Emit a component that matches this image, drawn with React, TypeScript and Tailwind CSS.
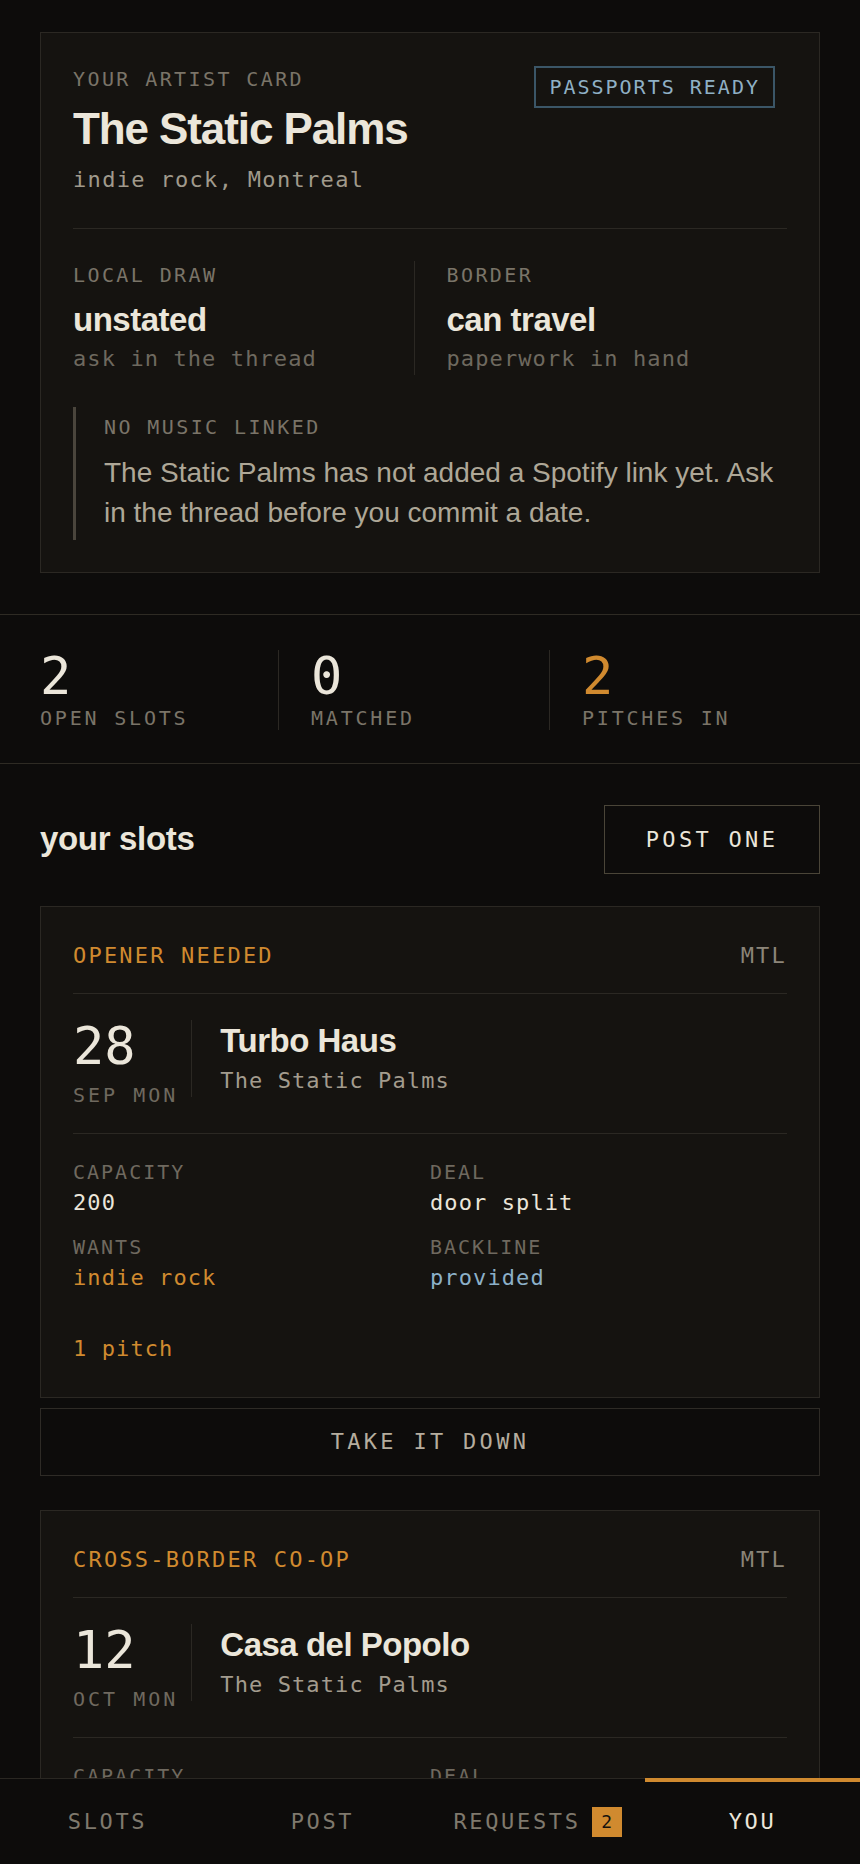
import React from "react";

const mono = "font-['DejaVu_Sans_Mono',monospace]";
const label =
  "font-['DejaVu_Sans_Mono',monospace] text-[20px] leading-[28px] tracking-[0.12em] uppercase text-[#7a7468]";

type Slot = {
  tag: string;
  city: string;
  day: string;
  month: string;
  venue: string;
  artist: string;
  capacity: string;
  deal: string;
  wants: string;
  backline: string;
  pitches: string;
};

const SLOTS: Slot[] = [
  {
    tag: "opener needed",
    city: "MTL",
    day: "28",
    month: "Sep Mon",
    venue: "Turbo Haus",
    artist: "The Static Palms",
    capacity: "200",
    deal: "door split",
    wants: "indie rock",
    backline: "provided",
    pitches: "1 pitch",
  },
  {
    tag: "cross-border co-op",
    city: "MTL",
    day: "12",
    month: "Oct Mon",
    venue: "Casa del Popolo",
    artist: "The Static Palms",
    capacity: "150",
    deal: "guarantee",
    wants: "indie rock",
    backline: "shared",
    pitches: "1 pitch",
  },
];

function SlotCard({ slot }: { slot: Slot }) {
  return (
    <div className="border border-[#2b2823] bg-[#151310] p-8">
      <div className="flex items-center justify-between border-b border-[#2b2823] pb-[21px]">
        <span className={`${mono} text-[22px] leading-[33px] tracking-[0.1em] uppercase text-[#d08a2f]`}>
          {slot.tag}
        </span>
        <span className={`${mono} text-[22px] leading-[33px] tracking-[0.1em] text-[#8c8579]`}>
          {slot.city}
        </span>
      </div>

      <div className="flex items-start border-b border-[#2b2823] pt-[26px] pb-[26px]">
        <div className="pr-[13px]">
          <div className={`${mono} text-[52px] leading-none text-[#ebe6da]`}>{slot.day}</div>
          <div
            className={`${mono} mt-[11px] text-[20px] leading-[24px] tracking-[0.15em] uppercase text-[#6f695f]`}
          >
            {slot.month}
          </div>
        </div>
        <div className="border-l border-[#2b2823] pt-[3px] pl-7">
          <div className="text-[33px] font-bold leading-[1.1] tracking-[-0.015em] text-[#ebe6da]">
            {slot.venue}
          </div>
          <div className={`${mono} mt-[5px] text-[22px] leading-[33px] tracking-[0.05em] text-[#a39c8e]`}>
            {slot.artist}
          </div>
        </div>
      </div>

      <div className="grid grid-cols-2 gap-y-[14px] pt-6">
        <Detail name="capacity" value={slot.capacity} tone="text-[#ebe6da]" />
        <Detail name="deal" value={slot.deal} tone="text-[#ebe6da]" />
        <Detail name="wants" value={slot.wants} tone="text-[#d08a2f]" />
        <Detail name="backline" value={slot.backline} tone="text-[#8cb0c8]" />
      </div>

      <div className={`${mono} mt-[38px] text-[22px] leading-[33px] tracking-[0.05em] text-[#d08a2f]`}>
        {slot.pitches}
      </div>
    </div>
  );
}

function Detail({ name, value, tone }: { name: string; value: string; tone: string }) {
  return (
    <div>
      <div className={`${mono} text-[20px] leading-[28px] tracking-[0.1em] uppercase text-[#6f695f]`}>
        {name}
      </div>
      <div className={`${mono} text-[22px] leading-[33px] tracking-[0.05em] ${tone}`}>{value}</div>
    </div>
  );
}

function Stat({ n, name, first, hot }: { n: string; name: string; first?: boolean; hot?: boolean }) {
  return (
    <div className={first ? "flex-1" : "flex-1 border-l border-[#2b2823] pl-8"}>
      <div className={`${mono} text-[52px] leading-none ${hot ? "text-[#d08a2f]" : "text-[#ebe6da]"}`}>{n}</div>
      <div
        className={`${mono} mt-[4px] text-[20px] leading-[24px] tracking-[0.14em] uppercase text-[#7a7468]`}
      >
        {name}
      </div>
    </div>
  );
}

const TABS = ["slots", "post", "requests", "you"];

export default function App() {
  return (
    <div className="min-h-screen bg-[#0d0c0b] pb-[120px] font-['Liberation_Sans',Arial,sans-serif] text-[#ebe6da]">
      <section className="px-10 pt-8 pb-[41px]">
        <div className="border border-[#2b2823] bg-[#151310] p-8">
          <div className="flex items-start justify-between border-b border-[#2b2823] pb-8">
            <div>
              <div className={label}>Your artist card</div>
              <h1 className="mt-3 text-[44px] font-bold leading-[1.1] tracking-[-0.025em] text-[#ebe6da]">
                The Static Palms
              </h1>
              <div className={`${mono} mt-2.5 text-[22px] leading-[33px] tracking-[0.06em] text-[#a09a8c]`}>
                indie rock, Montreal
              </div>
            </div>
            <div
              className={`${mono} mt-px mr-3 flex h-[42px] items-center border-2 border-[#3b5667] px-[13px] text-[20px] tracking-[0.1em] uppercase text-[#8fb0c5]`}
            >
              Passports ready
            </div>
          </div>

          <div className="flex pt-8">
            <div className="flex-1">
              <div className={label}>Local draw</div>
              <div className="mt-[13px] text-[33px] font-bold leading-[1.1] tracking-[-0.015em]">unstated</div>
              <div className={`${mono} mt-[3px] text-[22px] leading-[33px] tracking-[0.05em] text-[#6e695f]`}>
                ask in the thread
              </div>
            </div>
            <div className="flex-1 border-l border-[#2b2823] pl-8">
              <div className={label}>Border</div>
              <div className="mt-[13px] text-[33px] font-bold leading-[1.1] tracking-[-0.015em]">can travel</div>
              <div className={`${mono} mt-[3px] text-[22px] leading-[33px] tracking-[0.05em] text-[#6e695f]`}>
                paperwork in hand
              </div>
            </div>
          </div>

          <div className="mt-8 border-l-[3px] border-[#4a453c] pt-[6px] pb-[6px] pl-7">
            <div className={label}>No music linked</div>
            <p className="mt-3 text-[28px] leading-[40.6px] text-[#aea797]">
              The Static Palms has not added a Spotify link yet. Ask in the thread before you commit a date.
            </p>
          </div>
        </div>
      </section>

      <section className="flex border-y border-[#2e2b24] px-10 pt-[35px] pb-[33px]">
        <Stat n="2" name="open slots" first />
        <Stat n="0" name="matched" />
        <Stat n="2" name="pitches in" hot />
      </section>

      <section className="px-10 pt-[41px]">
        <div className="flex items-center justify-between">
          <h2 className="text-[33px] font-bold leading-[1.1] tracking-[-0.01em]">your slots</h2>
          <button
            className={`${mono} flex h-[69px] w-[216px] items-center justify-center border border-[#4a4538] text-[22px] tracking-[0.15em] uppercase text-[#ebe6da]`}
          >
            Post one
          </button>
        </div>

        <div className="mt-8">
          <SlotCard slot={SLOTS[0]} />
          <button
            className={`${mono} mt-[10px] flex h-[68px] w-full items-center justify-center border border-[#2e2b26] bg-[#0d0c0b] text-[22px] tracking-[0.15em] uppercase text-[#b5ad9e]`}
          >
            Take it down
          </button>
        </div>

        <div className="mt-[34px]">
          <SlotCard slot={SLOTS[1]} />
        </div>
      </section>

      <nav className="fixed inset-x-0 bottom-0 flex h-[86px] border-t border-[#2a2722] bg-[#0d0c0b]">
        {TABS.map((t) => {
          const active = t === "you";
          return (
            <div key={t} className="relative flex flex-1 items-center justify-center gap-[11px]">
              {active && <div className="absolute inset-x-0 -top-px h-[4px] bg-[#d08a2f]" />}
              <span
                className={`${mono} text-[22px] tracking-[0.12em] uppercase ${
                  active ? "text-[#ebe6da]" : "text-[#7f796d]"
                }`}
              >
                {t}
              </span>
              {t === "requests" && (
                <span
                  className={`${mono} flex h-[30px] w-[30px] items-center justify-center bg-[#d08a2f] text-[18px] text-[#15120e]`}
                >
                  2
                </span>
              )}
            </div>
          );
        })}
      </nav>
    </div>
  );
}
